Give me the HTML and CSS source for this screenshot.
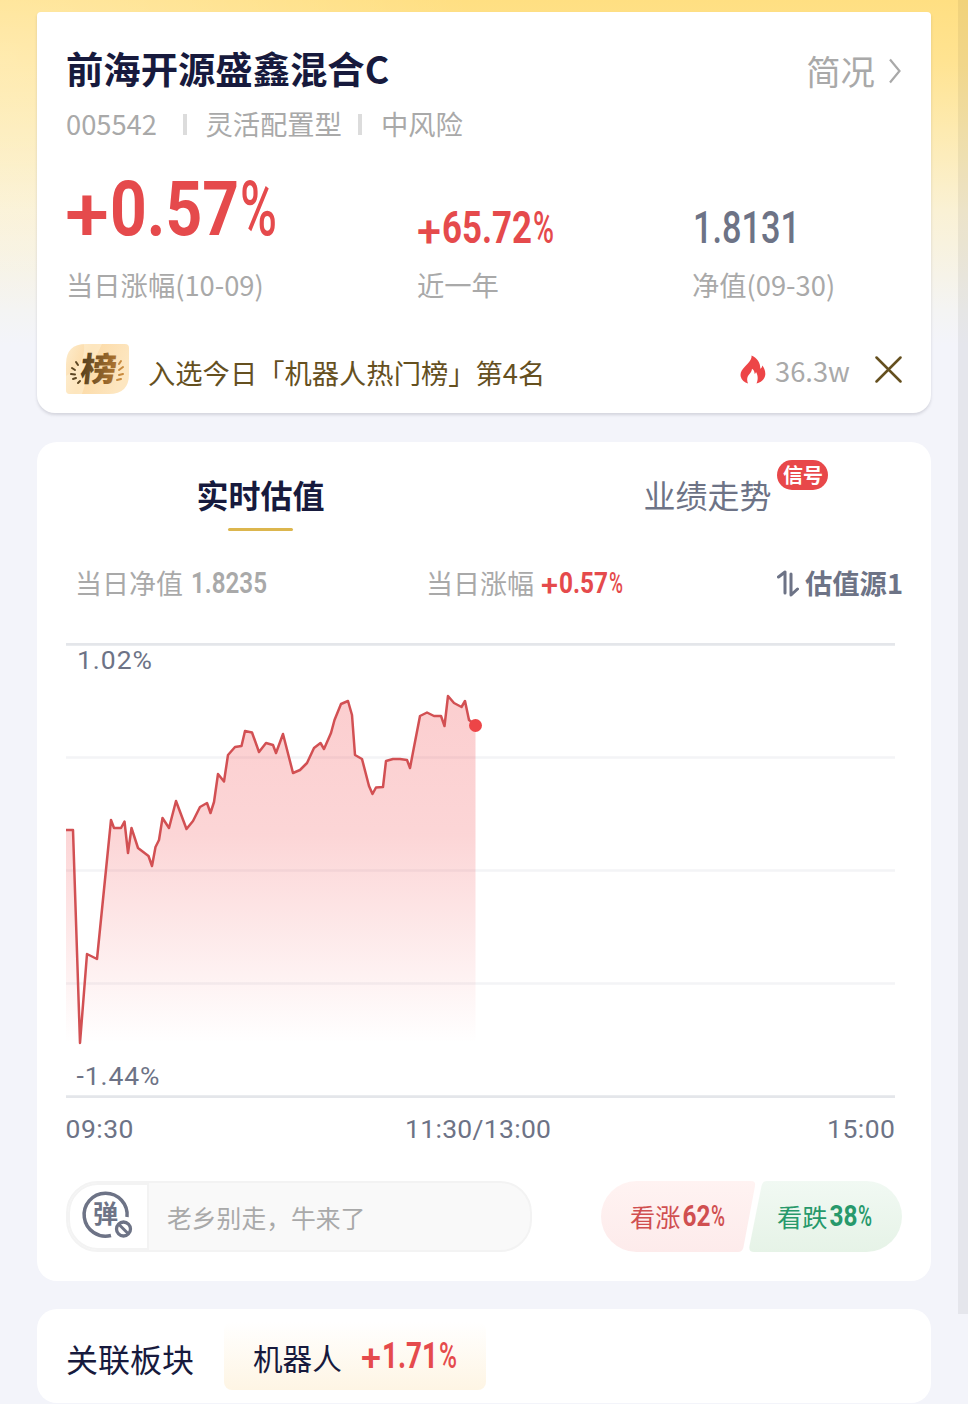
FILE: index.html
```html
<!DOCTYPE html>
<html lang="zh-CN">
<head>
    <meta charset="UTF-8">
    <meta name="viewport" content="width=device-width, initial-scale=1.0">
    <title>前海开源盛鑫混合C</title>
    <link rel="stylesheet" href="styles.css">
</head>
<body>
    <div class="page">
        <div class="card summary">
            <div class="title-row">
                <h1>前海开源盛鑫混合C</h1>
                <a class="profile">简况
                    <svg width="14" height="26" viewBox="0 0 14 26"><path d="M2 1.5 L11.5 13 L2 24.5" fill="none" stroke="#a9a9a9" stroke-width="2.2"/></svg>
                </a>
            </div>
            <div class="meta">
                <span class="code">005542</span>
                <span class="type">灵活配置型</span>
                <span>中风险</span>
            </div>
            <div class="stats">
                <div class="stat">
                    <svg class="num red" width="220" height="80" font-size="76">
                        <text x="-1" y="71" font-weight="500" textLength="44" lengthAdjust="spacingAndGlyphs">+</text>
                        <text x="44" y="65" textLength="129" lengthAdjust="spacingAndGlyphs">0.57</text>
                        <text x="174" y="65" font-weight="500" textLength="37" lengthAdjust="spacingAndGlyphs">%</text>
                    </svg>
                    <div class="label">当日涨幅(10-09)</div>
                </div>
                <div class="stat">
                    <svg class="num red" width="150" height="80" font-size="44">
                        <text x="0" y="77" font-weight="500" textLength="24" lengthAdjust="spacingAndGlyphs">+</text>
                        <text x="25" y="73" textLength="90" lengthAdjust="spacingAndGlyphs">65.72</text>
                        <text x="116" y="73" font-weight="500" textLength="21" lengthAdjust="spacingAndGlyphs">%</text>
                    </svg>
                    <div class="label">近一年</div>
                </div>
                <div class="stat">
                    <svg class="num slate" width="150" height="80" font-size="44">
                        <text x="1" y="73" font-weight="500" textLength="107" lengthAdjust="spacingAndGlyphs">1.8131</text>
                    </svg>
                    <div class="label">净值(09-30)</div>
                </div>
            </div>
            <div class="rank">
                <svg class="rank-badge" width="63" height="50" viewBox="0 0 63 50">
                    <defs>
                        <linearGradient id="badgeBg" x1="0" y1="0" x2="1" y2="0.3">
                            <stop offset="0" stop-color="#fdeccd"/>
                            <stop offset="0.4" stop-color="#fcdaa6"/>
                            <stop offset="1" stop-color="#fde6c0"/>
                        </linearGradient>
                        <linearGradient id="badgeText" x1="0" y1="0" x2="1" y2="0">
                            <stop offset="0" stop-color="#54401f"/>
                            <stop offset="1" stop-color="#b0752f"/>
                        </linearGradient>
                    </defs>
                    <path d="M20 0 H59 Q63 0 63 4 V30 Q63 50 43 50 H4 Q0 50 0 46 V20 Q0 0 20 0Z" fill="url(#badgeBg)"/>
                    <path d="M18 0 H36 Q24 24 16 50 H4 Q0 50 0 46 V32 Q20 20 18 0Z" fill="#fff3dc" opacity="0.45"/>
                    <text class="rank-char" transform="translate(13.5 37) skewX(-6)" textLength="36" lengthAdjust="spacingAndGlyphs" fill="url(#badgeText)">榜</text>
                    <g fill="none" stroke-width="2" stroke-linecap="round">
                        <path d="M10 18 L12 21 M6 24 L9 26 M5 30 L9 30.5 M7 35 L10 34 M12 39 L14 37" stroke="#5c4623"/>
                        <path d="M53 20 L55 17 M53 26 L57 23 M53 31 L57 30 M51 36 L55 35" stroke="#c88a3e"/>
                    </g>
                </svg>
                <span class="rank-text">入选今日「机器人热门榜」第4名</span>
                <svg width="26" height="29" viewBox="0 0 26 29"><path d="M11.5 0.5 C12 5 8.500 8 5 11.500 C1.500 15 0 18 0.700 21.500 C1.500 25 4.500 27.500 8 28.500 C6.500 24.500 7 21.500 9.500 19 C11 17.500 11.800 16 12 13.800 C14 15 14.500 17 14.700 19 C15.500 18.500 15.800 17.800 16 17 C18.500 21 17.800 25.500 16.500 28.500 C21 27.500 25 24 25.300 19.500 C25.500 15.500 23.800 12.500 22.300 10.500 C22 12.500 21.300 13.200 20.300 13.700 C20.500 8 17.500 3 11.500 0.500Z" fill="#ed4547"/></svg>
                <span class="heat">36.3w</span>
                <svg width="27" height="27" viewBox="0 0 27 27"><path d="M1.5 1.5 L25.5 25.5 M25.5 1.5 L1.5 25.5" stroke="#65501f" stroke-width="2.5" stroke-linecap="round"/></svg>
            </div>
        </div>

        <div class="card estimate">
            <div class="tabs">
                <div class="tab active">实时估值</div>
                <div class="tab"><span class="tab-name">业绩走势<span class="signal">信号</span></span></div>
            </div>
            <div class="values">
                <div class="value-net">当日净值
                    <svg class="num grey" width="80" height="32" font-size="30"><text x="0" y="26" font-weight="600" textLength="76" lengthAdjust="spacingAndGlyphs">1.8235</text></svg>
                </div>
                <div class="value-change">当日涨幅
                    <svg class="num red" width="84" height="32" font-size="30">
                        <text x="-1" y="28" font-weight="500" textLength="17" lengthAdjust="spacingAndGlyphs">+</text>
                        <text x="17" y="26" textLength="49" lengthAdjust="spacingAndGlyphs">0.57</text>
                        <text x="67" y="26" font-weight="500" textLength="14" lengthAdjust="spacingAndGlyphs">%</text>
                    </svg>
                </div>
                <div class="source">
                    <svg width="22" height="27" viewBox="0 0 22 27"><path d="M1.5 7 L8 2 V23 M14 4 V25 L20.5 19" fill="none" stroke="#6d7386" stroke-width="3" stroke-linejoin="round" stroke-linecap="round"/></svg>
                    <b>估值源1</b>
                </div>
            </div>
            <svg class="chart" width="830" height="512" viewBox="66 640 830 512">
                <defs>
                    <linearGradient id="area" x1="0" y1="0" x2="0" y2="1">
                        <stop offset="0" stop-color="#f24a4e" stop-opacity="0.27"/>
                        <stop offset="0.4" stop-color="#f24a4e" stop-opacity="0.23"/>
                        <stop offset="1" stop-color="#f24a4e" stop-opacity="0"/>
                    </linearGradient>
                </defs>
                <path d="M66 757.5 H895 M66 870.5 H895 M66 983.5 H895" stroke="#f3f4f6" stroke-width="2.5"/>
                <path d="M66 644.3 H895 M66 1096.7 H895" stroke="#e4e6ea" stroke-width="2.7"/>
                <path fill="url(#area)" d="M66 1043 V830 L73 830 80 1043 87 954 97 959 111 820 114 828 121 828 124.5 821.5 128 853 131.5 828 138 848 148.5 856 152 866 155.5 847 159 840 162.5 818 169 828 176 801 186.5 829 193 821 200 807 207 803 210.5 813 214 802 218 774 224 781.5 228 755 235 747 241.5 746 245 731 252 732.5 259 752 266 743 273 745 276 753 283 734 293 773 300 770 307 763 314 748 320.5 743 324 749 331 733 334.5 720 341 704 348 701 352 715 355 755 362 759 369 786 372.5 794 376 787.5 383 787 386 761 393 759 400 759 407 760 410 768 414 747 420 716 427 712.5 434 716 441 716 444.5 726 448 696 454 703 461.5 707 465 701 469 720 475.5 725 V1043Z"/>
                <path fill="none" stroke="#d25053" stroke-width="2.5" stroke-linejoin="round" d="M66 830 L73 830 80 1043 87 954 97 959 111 820 114 828 121 828 124.5 821.5 128 853 131.5 828 138 848 148.5 856 152 866 155.5 847 159 840 162.5 818 169 828 176 801 186.5 829 193 821 200 807 207 803 210.5 813 214 802 218 774 224 781.5 228 755 235 747 241.5 746 245 731 252 732.5 259 752 266 743 273 745 276 753 283 734 293 773 300 770 307 763 314 748 320.5 743 324 749 331 733 334.5 720 341 704 348 701 352 715 355 755 362 759 369 786 372.5 794 376 787.5 383 787 386 761 393 759 400 759 407 760 410 768 414 747 420 716 427 712.5 434 716 441 716 444.5 726 448 696 454 703 461.5 707 465 701 469 720 475.5 725"/>
                <circle cx="475.5" cy="725.5" r="6.5" fill="#ed4547"/>
                <g class="axis">
                    <text x="77" y="669" textLength="75">1.02%</text>
                    <text x="76.5" y="1085" textLength="83">-1.44%</text>
                    <text x="65.500" y="1138" textLength="68">09:30</text>
                    <text x="405" y="1138" textLength="146">11:30/13:00</text>
                    <text x="827" y="1138" textLength="68">15:00</text>
                </g>
            </svg>
            <div class="actions">
                <div class="comment">
                    <div class="comment-icon">
                        <svg width="52" height="50" viewBox="0 0 52 50">
                            <path d="M46 26 A21.5 21.5 0 1 0 30 44.5" fill="none" stroke="#6d7386" stroke-width="3.5"/>
                            <text x="12" y="32">弹</text>
                            <circle cx="42.5" cy="38" r="9.5" fill="#fff"/>
                            <circle cx="42.5" cy="38" r="7" fill="none" stroke="#6d7386" stroke-width="3.3"/>
                            <path d="M38 33.5 L47 42.5" stroke="#6d7386" stroke-width="3"/>
                        </svg>
                    </div>
                    <span>老乡别走，牛来了</span>
                </div>
                <svg class="vote" width="301" height="71" viewBox="0 0 301 71">
                    <defs>
                        <linearGradient id="up" x1="0" y1="0" x2="0" y2="1"><stop offset="0" stop-color="#fff3f2"/><stop offset="1" stop-color="#fdebeb"/></linearGradient>
                        <linearGradient id="down" x1="0" y1="0" x2="0" y2="1"><stop offset="0" stop-color="#f1f9f3"/><stop offset="1" stop-color="#e6f3e7"/></linearGradient>
                    </defs>
                    <path d="M35.5 0 H150 Q155 0 154 5 L142.5 66 Q141.5 71 137 71 H35.5 A35.5 35.5 0 0 1 35.5 0Z" fill="url(#up)"/>
                    <path d="M265.5 0 H166 Q161.5 0 160.5 5 L148.5 65 Q147.5 71 153 71 H265.5 A35.5 35.5 0 0 0 265.5 0Z" fill="url(#down)"/>
                    <g class="vote-up">
                        <text class="vote-name" x="29" y="46">看涨</text>
                        <text class="vote-num" x="81.5" y="45" textLength="28" lengthAdjust="spacingAndGlyphs">62</text>
                        <text class="vote-num pct" x="110" y="45" textLength="14" lengthAdjust="spacingAndGlyphs">%</text>
                    </g>
                    <g class="vote-down">
                        <text class="vote-name" x="176" y="46">看跌</text>
                        <text class="vote-num" x="228.5" y="45" textLength="28" lengthAdjust="spacingAndGlyphs">38</text>
                        <text class="vote-num pct" x="257" y="45" textLength="14" lengthAdjust="spacingAndGlyphs">%</text>
                    </g>
                </svg>
            </div>
        </div>

        <div class="card related">
            <h2>关联板块</h2>
            <div class="chip">
                <span>机器人</span>
                <svg class="num red" width="96" height="40" font-size="36">
                    <text x="-1" y="35" font-weight="500" textLength="20" lengthAdjust="spacingAndGlyphs">+</text>
                    <text x="20" y="32" textLength="56" lengthAdjust="spacingAndGlyphs">1.71</text>
                    <text x="77" y="32" font-weight="500" textLength="18" lengthAdjust="spacingAndGlyphs">%</text>
                </svg>
            </div>
        </div>
    </div>
    <div class="scrollbar"></div>
</body>
</html>
```

FILE: styles.css
```css
* {
    box-sizing: border-box;
}
body {
    margin: 0;
    font-family: "Noto Sans CJK SC", sans-serif;
    background-color: #f3f4fa;
    color: #a9a9a9;
}
.page {
    height: 1404px;
    padding: 12px 37px 0;
    overflow: hidden;
    background: radial-gradient(ellipse 480px 260px at 0 60px, rgba(255, 255, 255, 0.28), rgba(255, 255, 255, 0)),
        linear-gradient(#ffdf82 0, #ffe391 60px, #fdeab0 130px, #faf1d4 210px, #f4f4f3 310px, #f3f4fa 345px);
}
.card {
    background-color: #fff;
    border-radius: 20px;
    padding: 0 29px;
}
svg {
    display: block;
    flex: none;
}
.num {
    font-family: Roboto, sans-serif;
    font-weight: 700;
    overflow: visible;
}
.red {
    fill: #e54a4c;
}
.slate {
    fill: #6d7386;
}
.grey {
    fill: #a9a9a9;
}

/* fund summary */
.summary {
    height: 401px;
    padding-top: 36px;
    border-radius: 4px 4px 18px 18px;
    box-shadow: 0 2px 3px rgba(90, 90, 110, 0.2);
}
.title-row {
    display: flex;
    justify-content: space-between;
    height: 40px;
}
h1 {
    margin: 0;
    font-size: 37.33px;
    line-height: 40px;
    font-weight: 700;
    color: #171a3d;
}
.profile {
    display: flex;
    align-items: center;
    gap: 13px;
    height: 44px;
    font-size: 34.4px;
    line-height: 44px;
}
.profile svg {
    margin-top: 2px;
}
.meta {
    display: flex;
    margin-top: 19px;
    font-size: 27.3px;
    line-height: 32px;
}
.code,
.type {
    display: flex;
    align-items: center;
}
.code::after,
.type::after {
    content: "";
    width: 4px;
    height: 21px;
    margin: 3px 18.5px 0 26px;
    background-color: #dcdcdc;
}
.type::after {
    margin: 3px 19px 0 16px;
}
.stats {
    display: grid;
    grid-template-columns: 351px 275px 1fr;
    margin-top: 31px;
}
.label {
    margin-top: 18px;
    font-size: 27.3px;
    line-height: 32px;
}
.rank {
    display: flex;
    align-items: center;
    height: 50px;
    margin-top: 44px;
    font-size: 27.3px;
    line-height: 32px;
}
.rank-char {
    font-size: 33px;
    font-weight: 900;
}
.rank-text {
    flex: 1;
    padding: 6px 0 0 19px;
    color: #65501f;
}
.heat {
    margin: 0 25px 0 9px;
    padding-top: 2px;
}

/* intraday estimate */
.estimate {
    height: 839px;
    margin-top: 29px;
}
.tabs {
    display: flex;
    height: 90px;
    margin: 0 -29px;
}
.tab {
    flex: 1;
    padding-top: 32px;
    font-size: 32px;
    line-height: 40px;
    text-align: center;
    color: #6d7386;
}
.tab.active {
    font-weight: 700;
    color: #171a3d;
}
.tab.active::after {
    content: "";
    display: block;
    width: 65px;
    height: 3px;
    margin: 14px auto 0;
    border-radius: 2px;
    background-color: #dcb64e;
}
.tab-name {
    position: relative;
}
.signal {
    position: absolute;
    top: -11px;
    left: 134px;
    width: 51px;
    height: 30px;
    border-radius: 15px;
    font-size: 20px;
    line-height: 30px;
    font-weight: 700;
    color: #fff;
    background-color: #e8484a;
}
.values {
    display: flex;
    height: 32px;
    margin-top: 35px;
    padding-left: 9px;
    font-size: 27px;
    line-height: 32px;
}
.value-net,
.value-change,
.source {
    display: flex;
    align-items: center;
    gap: 8px;
}
.value-net {
    width: 351px;
}
.source {
    margin: -2px -1px 0 auto;
    font-size: 27.3px;
    gap: 6px;
    color: #6d7386;
}
.source svg {
    margin-top: 2px;
}
.chart {
    margin-top: 41px;
}
.axis {
    font-family: Roboto, sans-serif;
    font-size: 26.5px;
    fill: #6d7386;
}
.actions {
    display: flex;
    justify-content: space-between;
    margin-top: 29px;
}
.comment {
    display: flex;
    width: 466px;
    height: 71px;
    border: 2px solid #f3f3f3;
    border-radius: 32px;
    overflow: hidden;
    font-size: 24.8px;
    line-height: 68px;
    background-color: #f9f9f9;
}
.comment-icon {
    width: 81px;
    margin-right: 18px;
    padding: 6px 0 0 11px;
    border: 2px solid #f3f3f3;
    border-radius: 30px 0 0 30px;
    background-color: #fff;
}
.comment-icon text {
    font-size: 25px;
    font-weight: 700;
    fill: #6d7386;
}
.vote-name {
    font-size: 25.2px;
}
.vote-num {
    font-family: Roboto, sans-serif;
    font-size: 30px;
    font-weight: 700;
}
.vote-num.pct {
    font-weight: 500;
}
.vote-up {
    fill: #d04f50;
}
.vote-down {
    fill: #27996b;
}

/* related sector */
.related {
    display: flex;
    height: 94px;
    margin-top: 28px;
    padding-top: 13px;
}
h2 {
    margin: 0 30px 0 0;
    font-size: 32px;
    line-height: 72px;
    font-weight: 400;
    color: #171a3d;
}
.chip {
    display: flex;
    align-items: center;
    gap: 20px;
    width: 262px;
    height: 68px;
    padding-left: 29px;
    border-radius: 8px;
    font-size: 29.6px;
    line-height: 68px;
    color: #171a3d;
    background: linear-gradient(#fff, #fef5e4);
}
.chip span {
    padding-top: 3px;
}
.scrollbar {
    position: absolute;
    top: 0;
    right: 0;
    width: 10px;
    height: 1314px;
    background-color: rgba(0, 0, 0, 0.055);
}
```
